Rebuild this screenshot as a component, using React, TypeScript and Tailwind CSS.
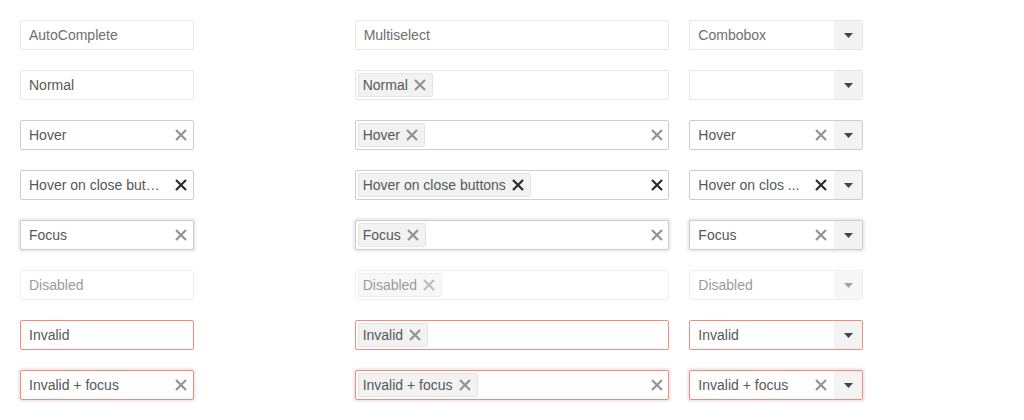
import React from "react"

type State = 'placeholder' | 'normal' | 'hover' | 'closeHover' | 'focus' | 'disabled' | 'invalid' | 'invalidFocus'

const rows: { state: State; label: string }[] = [
  { state: 'placeholder', label: '' },
  { state: 'normal', label: 'Normal' },
  { state: 'hover', label: 'Hover' },
  { state: 'closeHover', label: 'Hover on close buttons' },
  { state: 'focus', label: 'Focus' },
  { state: 'disabled', label: 'Disabled' },
  { state: 'invalid', label: 'Invalid' },
  { state: 'invalidFocus', label: 'Invalid + focus' },
]

const boxClass: Record<State, string> = {
  placeholder: 'border-[#e6e6e6]',
  normal: 'border-[#e6e6e6]',
  hover: 'border-[#cdcdcd]',
  closeHover: 'border-[#cdcdcd]',
  focus: 'border-[#cdcdcd] shadow-[0_0_2px_2px_rgba(0,0,0,0.08)]',
  disabled: 'border-[#e6e6e6] opacity-60',
  invalid: 'border-[#f7897d]',
  invalidFocus: 'border-[#f7897d] shadow-[0_0_2px_2px_rgba(0,0,0,0.08)]',
}

const showClear = (s: State) => s === 'hover' || s === 'closeHover' || s === 'focus' || s === 'invalidFocus'

function XIcon({ dark }: { dark?: boolean }) {
  return (
    <svg width="16" height="16" viewBox="0 0 16 16" className="shrink-0">
      <path d="M3 3 L13 13 M13 3 L3 13" stroke={dark ? '#2b2b2b' : '#939393'} strokeWidth="2.2" fill="none" />
    </svg>
  )
}

function Arrow({ dim }: { dim?: boolean }) {
  return (
    <span className="w-[28px] h-full flex items-center justify-center bg-[#f3f3f3]">
      <svg width="9" height="5" viewBox="0 0 9 5">
        <path d="M0 0 H9 L4.5 5 Z" fill={dim ? '#656565' : '#454545'} />
      </svg>
    </span>
  )
}

function Box({ state, className, children }: { state: State; className: string; children: React.ReactNode }) {
  return (
    <div className={`h-[30px] border rounded-[2px] bg-white flex items-center overflow-hidden text-[14px] text-[#575757] ${boxClass[state]} ${className}`}>
      {children}
    </div>
  )
}

function AutoComplete({ state, label }: { state: State; label: string }) {
  const text = state === 'closeHover' ? 'Hover on close but…' : label
  return (
    <Box state={state} className="w-[174px]">
      <span className={`flex-1 pl-[8px] whitespace-nowrap ${state === 'placeholder' ? 'text-[#6e6e6e]' : ''}`}>
        {state === 'placeholder' ? 'AutoComplete' : text}
      </span>
      {showClear(state) && <span className="mr-[4px] flex"><XIcon dark={state === 'closeHover'} /></span>}
    </Box>
  )
}

function MultiSelect({ state, label }: { state: State; label: string }) {
  return (
    <Box state={state} className="w-[314px]">
      {state === 'placeholder' ? (
        <span className="flex-1 pl-[8px] text-[#6e6e6e]">Multiselect</span>
      ) : (
        <span className="flex-1 flex items-center pl-[2px]">
          <span className="h-[24px] flex items-center gap-[4px] pl-[4px] pr-[4px] bg-[#f2f2f2] border border-[#e4e4e4] rounded-[2px] whitespace-nowrap">
            {label}
            <XIcon dark={state === 'closeHover'} />
          </span>
        </span>
      )}
      {showClear(state) && <span className="mr-[3px] flex"><XIcon dark={state === 'closeHover'} /></span>}
    </Box>
  )
}

function ComboBox({ state, label }: { state: State; label: string }) {
  const text = state === 'closeHover' ? 'Hover on clos ...' : state === 'normal' ? '' : label
  return (
    <Box state={state} className="w-[174px]">
      <span className={`flex-1 pl-[8px] whitespace-nowrap ${state === 'placeholder' ? 'text-[#6e6e6e]' : ''}`}>
        {state === 'placeholder' ? 'Combobox' : text}
      </span>
      {showClear(state) && <span className="mr-[5px] flex"><XIcon dark={state === 'closeHover'} /></span>}
      <Arrow dim={state === 'disabled'} />
    </Box>
  )
}

export default function App() {
  return (
    <main className="w-[1024px] h-[420px] bg-white pt-[20px] pl-[20px]" style={{ fontFamily: '"Liberation Sans", Arial, sans-serif' }}>
      <div className="grid grid-cols-3 gap-y-[20px]">
        {rows.map((r) => (
          <React.Fragment key={r.state}>
            <AutoComplete state={r.state} label={r.label} />
            <MultiSelect state={r.state} label={r.label} />
            <ComboBox state={r.state} label={r.label} />
          </React.Fragment>
        ))}
      </div>
    </main>
  )
}
